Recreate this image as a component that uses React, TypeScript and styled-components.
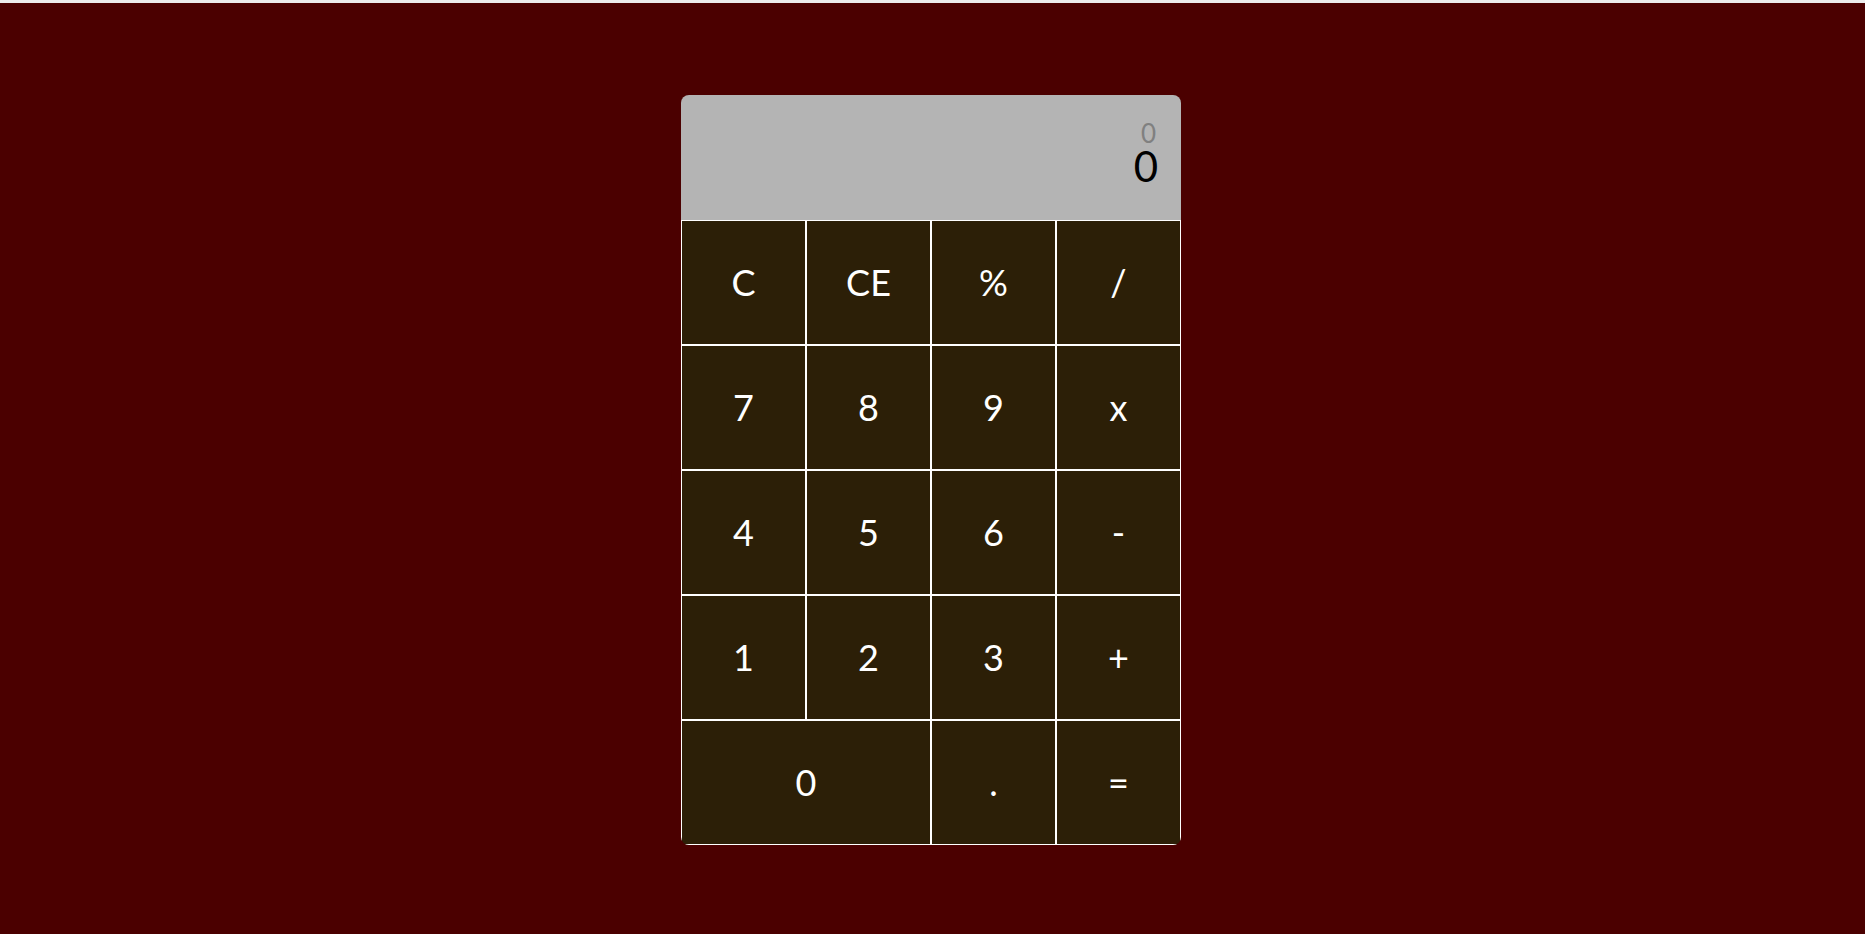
import React, { useState } from "react";
import styled, { createGlobalStyle } from "styled-components";

const Global = createGlobalStyle`
  html { background: #ececec; }
  body {
    margin: 0;
    padding-top: 3px;
    background: #ececec;
    font-family: Lato, "DejaVu Sans", sans-serif;
  }
`;

const Page = styled.div`
  min-height: 931px;
  background: #4b0000;
  display: flex;
  justify-content: center;
  align-items: flex-start;
  padding: 92px 3px 0 0;
  box-sizing: border-box;
`;

const Calculator = styled.div`
  width: 500px;
  border-radius: 8px;
  overflow: hidden;
  display: flex;
  flex-direction: column;
`;

const Display = styled.div`
  height: 125px;
  background: #b4b4b4;
  display: flex;
  flex-direction: column;
  align-items: flex-end;
  padding: 27px 23px 0 0;
  box-sizing: border-box;
`;

const Previous = styled.div`
  font-size: 26px;
  line-height: 22px;
  color: #808080;
  margin-right: 2px;
`;

const Current = styled.div`
  font-size: 42px;
  line-height: 40px;
  margin-top: 2px;
  color: #000;
`;

const Keys = styled.div`
  display: grid;
  grid-template-columns: repeat(4, 1fr);
  grid-auto-rows: 125px;
`;

const Key = styled.button<{ $wide?: boolean }>`
  grid-column: ${(p) => (p.$wide ? "span 2" : "span 1")};
  background: #2c1f07;
  color: #fff;
  border: 1px solid #fff;
  font-family: inherit;
  font-size: 36px;
  padding: 0 0 2px;
  cursor: pointer;
`;

const rows: { label: string; wide?: boolean }[] = [
  { label: "C" }, { label: "CE" }, { label: "%" }, { label: "/" },
  { label: "7" }, { label: "8" }, { label: "9" }, { label: "x" },
  { label: "4" }, { label: "5" }, { label: "6" }, { label: "-" },
  { label: "1" }, { label: "2" }, { label: "3" }, { label: "+" },
  { label: "0", wide: true }, { label: "." }, { label: "=" },
];

export default function App() {
  const [prev] = useState("0");
  const [cur] = useState("0");
  return (
    <>
      <Global />
      <Page>
        <Calculator>
          <Display>
            <Previous>{prev}</Previous>
            <Current>{cur}</Current>
          </Display>
          <Keys>
            {rows.map((k) => (
              <Key key={k.label} $wide={k.wide}>
                {k.label}
              </Key>
            ))}
          </Keys>
        </Calculator>
      </Page>
    </>
  );
}
